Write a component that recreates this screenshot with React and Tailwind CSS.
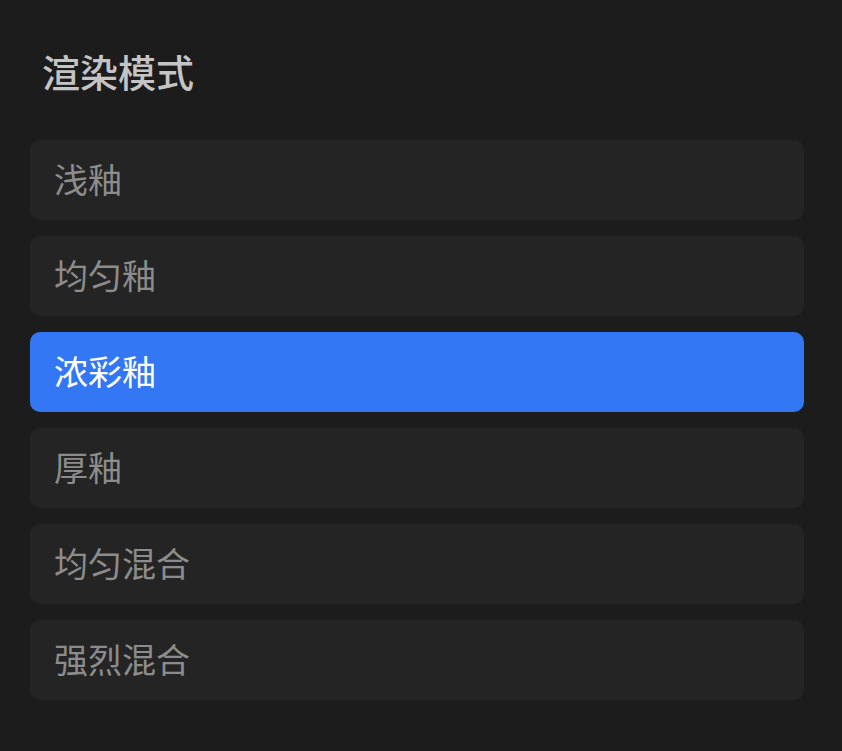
import { useState } from 'react';

const modes = ['浅釉', '均匀釉', '浓彩釉', '厚釉', '均匀混合', '强烈混合'];

const App = () => {
  const [active, setActive] = useState('浓彩釉');

  return (
    <div
      className="min-h-screen w-full bg-[#1c1c1c] pl-[30px] pr-[38px] pt-[46px] pb-[51px]"
      style={{ fontFamily: '"Noto Sans CJK SC", "Noto Sans", sans-serif' }}
    >
      <h2 className="ml-[12px] h-[50px] text-[38px] leading-[50px] font-medium text-[#c4c4c4]">
        渲染模式
      </h2>

      <div className="mt-[44px] flex flex-col gap-4">
        {modes.map((mode) => (
          <button
            key={mode}
            onClick={() => setActive(mode)}
            className={`flex h-20 w-full items-center rounded-[10px] pb-1 pl-6 text-left text-[34px] ${
              active === mode
                ? 'bg-[#3377f5] text-white'
                : 'bg-[#242424] text-[#8c8c8c]'
            }`}
          >
            {mode}
          </button>
        ))}
      </div>
    </div>
  );
};

export default App;
